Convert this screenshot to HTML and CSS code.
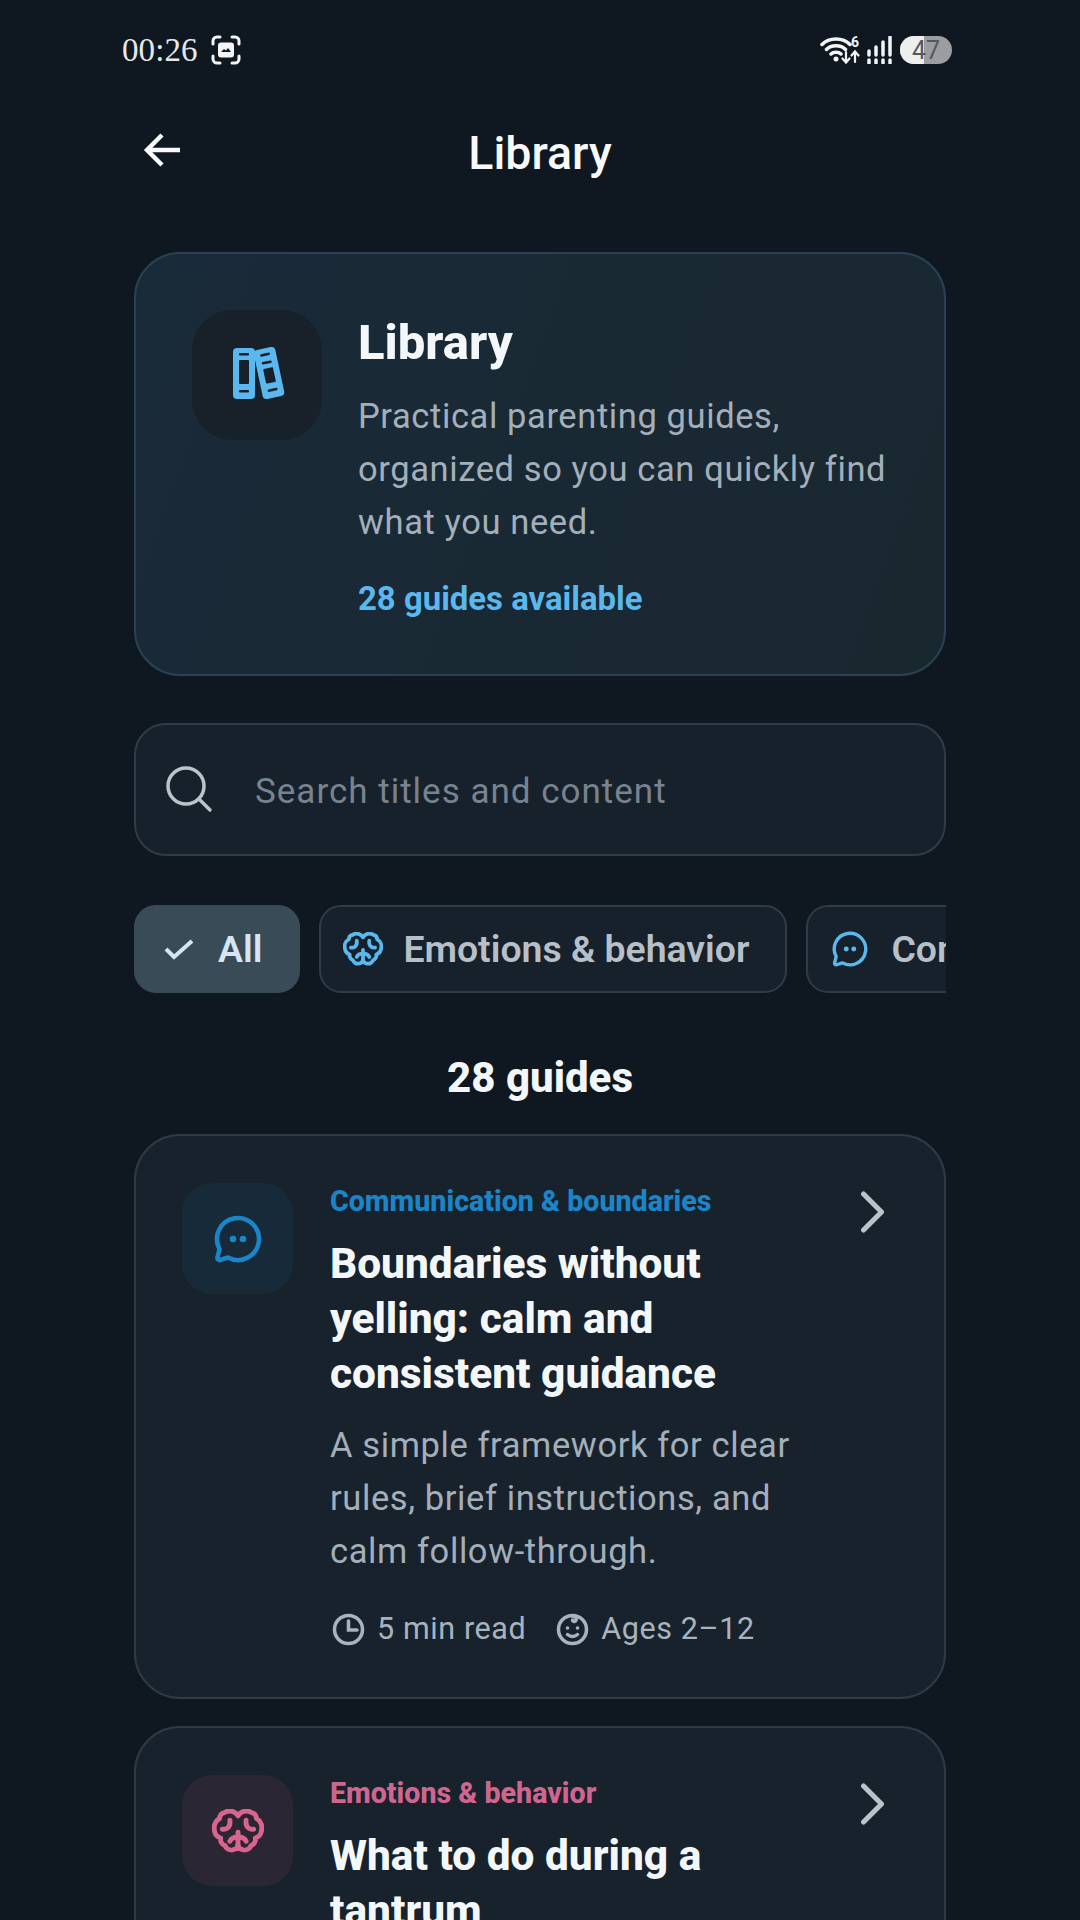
FILE: index.html
```html
<!DOCTYPE html>
<html lang="en">
<head>
<meta charset="utf-8">
<title>Library</title>
<link rel="stylesheet" href="styles.css">
</head>
<body>
<div class="screen">
  <div class="status">
    <div class="status-left">
      <span class="time">00:26</span>
      <svg class="shot" width="30" height="30" viewBox="0 0 30 30"><path class="shot-line" d="M2 9V6a4 4 0 0 1 4-4h3M21 2h3a4 4 0 0 1 4 4v3M28 21v3a4 4 0 0 1-4 4h-3M9 28H6a4 4 0 0 1-4-4v-3"/><rect class="shot-fill" x="7" y="7.500" width="16" height="15" rx="3"/><path class="shot-hole" d="M10 17l3-3 2 1.500 2-2.500 3 4z"/></svg>
    </div>
    <div class="status-right">
      <svg class="wifi" width="42" height="30" viewBox="0 0 42 30"><path class="st" d="M2 9.500C9 2 23 2 30 9.500M6.500 14.500C11 9.500 21 9.500 25.500 14.500M11 19c2.500-2.500 7.500-2.500 10 0"/><circle class="sf" cx="16" cy="24" r="2.500"/><path class="st thin" d="M26 17v10M22.500 23.500l3.500 4 3.500-4M35 27V17M31.500 20.500l3.500-4 3.500 4"/><text class="six" x="31" y="12">6</text></svg>
      <svg class="signal" width="26" height="28" viewBox="0 0 26 28"><path class="bars" d="M3 15v4M3 24v3M10 11v8M10 24v3M17 6v13M17 24v3M24 1v18M24 24v3"/></svg>
      <div class="battery"><span class="battery-level"></span><span class="battery-num">47</span></div>
    </div>
  </div>

  <header class="topbar">
    <svg class="back" width="40" height="38" viewBox="0 0 40 38"><path d="M38 19H6M20 4L5 19l15 15"/></svg>
    <h1 class="topbar-title">Library</h1>
  </header>

  <main class="content">
    <section class="hero">
      <div class="hero-icon">
        <svg width="60" height="60" viewBox="1 0 60 60">
          <rect class="b-fill" x="7" y="3" width="22" height="51" rx="4"/>
          <rect class="b-slot" x="13" y="8" width="10" height="2.500" rx="1"/>
          <rect class="b-slot" x="13" y="15" width="10" height="24" rx="1"/>
          <rect class="b-slot" x="13" y="45" width="10" height="2.500" rx="1"/>
          <g transform="rotate(-12 43 28)">
            <rect class="b-fill" x="32" y="3" width="22" height="50" rx="4"/>
            <rect class="b-slot" x="38" y="8" width="10" height="2.500" rx="1"/>
            <rect class="b-slot" x="38" y="16" width="10" height="2.500" rx="1"/>
            <rect class="b-slot" x="38" y="23" width="10" height="15" rx="1"/>
            <rect class="b-slot" x="38" y="44" width="10" height="2.500" rx="1"/>
          </g>
        </svg>
      </div>
      <div class="hero-text">
        <h2 class="hero-title">Library</h2>
        <p class="hero-desc">Practical parenting guides, organized so you can quickly find what you need.</p>
        <p class="hero-count">28 guides available</p>
      </div>
    </section>

    <div class="search">
      <svg class="search-icon" width="48" height="48" viewBox="0 0 48 48"><circle cx="21" cy="20" r="18"/><path d="M34 33l11 11"/></svg>
      <span class="search-text">Search titles and content</span>
    </div>

    <div class="chips">
      <div class="chip chip-active">
        <svg class="check" width="30" height="22" viewBox="0 0 30 22"><path d="M2 11l8 8L28 3"/></svg>
        <span>All</span>
      </div>
      <div class="chip">
        <svg class="ic ic-blue" width="40" height="34" viewBox="0 0 48 40"><use href="#brain"/></svg>
        <span>Emotions &amp; behavior</span>
      </div>
      <div class="chip chip-chat">
        <svg class="ic ic-blue" width="36" height="36" viewBox="0 0 48 48"><use href="#chat"/></svg>
        <span>Communication &amp; boundaries</span>
      </div>
    </div>

    <h3 class="count">28 guides</h3>

    <article class="card">
      <div class="card-icon tint-blue">
        <svg class="ic ic-deep" width="48" height="48" viewBox="0 0 48 48"><use href="#chat"/></svg>
      </div>
      <div class="card-body">
        <p class="cat cat-blue">Communication &amp; boundaries</p>
        <h4 class="card-title">Boundaries without yelling: calm and consistent guidance</h4>
        <p class="card-desc">A simple framework for clear rules, brief instructions, and calm follow-through.</p>
        <div class="meta">
          <span class="meta-item">
            <svg class="meta-ic" width="33" height="33" viewBox="0 0 33 33"><circle cx="16.500" cy="16.500" r="14"/><path d="M16.500 8v9h8.500"/></svg>
            5 min read
          </span>
          <span class="meta-item">
            <svg class="meta-ic" width="33" height="33" viewBox="0 0 33 33"><circle cx="16.500" cy="16.500" r="14"/><path d="M16 3c4 0 5 3 3.500 5-1 1-3 .5-3-1"/><path d="M11.500 21.500c3 2.500 7 2.500 10 0"/><circle class="meta-dot" cx="11.500" cy="15" r="1.800"/><circle class="meta-dot" cx="21.500" cy="15" r="1.800"/></svg>
            Ages 2–12
          </span>
        </div>
      </div>
      <svg class="chev" width="26" height="42" viewBox="0 0 26 42"><path d="M3.500 3l18 18-18 18"/></svg>
    </article>

    <article class="card">
      <div class="card-icon tint-pink">
        <svg class="ic ic-pink" width="52" height="44" viewBox="0 0 48 40"><use href="#brain"/></svg>
      </div>
      <div class="card-body">
        <p class="cat cat-pink">Emotions &amp; behavior</p>
        <h4 class="card-title">What to do during a tantrum</h4>
      </div>
      <svg class="chev" width="26" height="42" viewBox="0 0 26 42"><path d="M3.500 3l18 18-18 18"/></svg>
    </article>
  </main>
</div>

<svg class="defs" width="0" height="0">
  <defs>
    <g id="brain" stroke-width="4.500">
      <path d="M24 6C22 2 16 0 11.500 3 8.500 3.500 7 6 7 8.500 3 10.500 1 15.500 2.500 20.500c.5 3 2.500 5 5.500 6-.5 3 1 6 4 7 1 3 4 4.500 7 4 2.500-.5 5-2 5-5 0 3 2.500 4.500 5 5 3 .5 6-1 7-4 3-1 4.500-4 4-7 3-1 5-3 5.500-6C47 15.500 45 10.500 41 8.500c0-2.500-1.500-5-4.500-5.500C32 0 26 2 24 6z"/>
      <path d="M24 21v14M24 25.500c-2.500 0-6 .5-7.500 4M24 25.500c2.500 0 6 .5 7.500 4M16.500 10c.5 3.500-.5 6-2.500 7.500-1.500 1-3 1.200-4.500.8M31.500 10c-.5 3.500.5 6 2.500 7.500 1.500 1 3 1.200 4.500.8"/>
    </g>
    <g id="chat">
      <path d="M5.500 34A21 21 0 1 1 14 42.500L6 45c-1.500.5-3-1-2.500-2.500z"/>
      <circle class="dot" cx="19" cy="24" r="3.300"/>
      <circle class="dot" cx="29" cy="24" r="3.300"/>
    </g>
  </defs>
</svg>
</body>
</html>
```

FILE: styles.css
```css
* { box-sizing: border-box; }
html, body { margin: 0; padding: 0; }
body {
  width: 1080px;
  height: 1920px;
  overflow: hidden;
  background: #0f1720;
  font-family: Roboto, "Noto Sans", sans-serif;
  color: #f4f7fa;
}
h1, h2, h3, h4, p { margin: 0; }
.defs { position: absolute; }
.screen { height: 1920px; overflow: hidden; }

.status {
  height: 100px;
  padding: 0 128px 0 122px;
  display: flex;
  align-items: center;
  justify-content: space-between;
}
.status-left, .status-right { display: flex; align-items: center; }
.time { font-family: "Liberation Serif", serif; font-size: 33px; color: #e6e9ec; letter-spacing: 0.1px; }
.shot { margin-left: 13px; }
.shot-line { fill: none; stroke: #f2f4f6; stroke-width: 3; stroke-linecap: round; }
.shot-fill { fill: #f2f4f6; }
.shot-hole { fill: #0f1720; }
.status-right { gap: 4px; }
.st { fill: none; stroke: #f2f4f6; stroke-width: 3.500; stroke-linecap: round; }
.st.thin { stroke-width: 2.200; }
.sf { fill: #f2f4f6; }
.six { fill: #f2f4f6; font: 700 14px Roboto, sans-serif; }
.bars { fill: none; stroke: #f2f4f6; stroke-width: 3.500; stroke-linecap: round; }
.battery {
  margin-left: 4px;
  width: 52px;
  height: 28px;
  border-radius: 14px;
  background: #9b9da0;
  position: relative;
  overflow: hidden;
  display: flex;
  align-items: center;
  justify-content: center;
}
.battery-level { position: absolute; left: 0; top: 0; bottom: 0; width: 47%; background: #eceef0; }
.battery-num { position: relative; font-size: 25px; color: #55585c; font-family: Roboto, sans-serif; }

.topbar {
  height: 104px;
  display: flex;
  align-items: center;
  justify-content: center;
  position: relative;
}
.back { position: absolute; left: 142px; top: 31px; }
.back path { fill: none; stroke: #f7f9fb; stroke-width: 4.500; }
.topbar-title { font-size: 46.500px; font-weight: 500; line-height: 52px; padding-top: 2px; color: #f7f9fb; }

.content { padding: 48px 134px 0; display: flex; flex-direction: column; }

.hero {
  height: 424px;
  flex: none;
  border: 2px solid #2a4153;
  border-radius: 46px;
  background: linear-gradient(110deg, #192a39, #19282f);
  padding: 56px 40px 0 56px;
  display: flex;
  gap: 36px;
}
.hero-icon {
  width: 130px;
  height: 130px;
  flex: none;
  border-radius: 40px;
  background: #18212a;
  display: flex;
  align-items: center;
  justify-content: center;
}
.b-fill { fill: #5ab8ee; }
.b-slot { fill: #18212a; }
.hero-text { flex: 1; min-width: 0; }
.hero-title { font-size: 49px; font-weight: 800; line-height: 60px; padding-top: 3px; color: #f4f7fa; }
.hero-desc { margin-top: 17px; font-size: 34.500px; line-height: 53px; color: #a3afba; letter-spacing: 0.6px; }
.hero-count { margin-top: 28px; font-size: 32.900px; line-height: 44px; font-weight: 700; color: #5ab8ee; }

.search {
  margin-top: 47px;
  height: 133px;
  flex: none;
  border: 2px solid #2e3b48;
  border-radius: 32px;
  background: #17212b;
  display: flex;
  align-items: center;
  padding-left: 29px;
  gap: 42px;
}
.search-icon { flex: none; }
.search-icon circle, .search-icon path { fill: none; stroke: #bcc4cb; stroke-width: 3.500; stroke-linecap: round; }
.search-text { font-size: 35px; color: #77838f; letter-spacing: 1px; padding-top: 4px; }

.chips { margin-top: 49px; display: flex; gap: 19px; overflow: hidden; flex: none; }
.chip {
  flex: none;
  height: 88px;
  border: 2px solid #2e3b48;
  border-radius: 22px;
  background: #17212b;
  padding: 0 36px 0 22px;
  display: flex;
  align-items: center;
  gap: 20px;
  font-size: 37.400px;
  font-weight: 600;
  color: #b7c0c9;
}
.chip-chat { padding-left: 24px; gap: 23px; }
.chip-active { background: #3a4b58; border-color: #3a4b58; color: #d5e5f2; padding: 0 36px 0 28px; gap: 24px; }
.check path { fill: none; stroke: #d5e5f2; stroke-width: 4; }
.ic use { fill: none; stroke-width: 4.500; stroke-linecap: round; stroke-linejoin: round; }
.dot { fill: currentColor; stroke: none; }
.ic-blue { color: #5ab8ee; stroke: #5ab8ee; }
.ic-deep { color: #1a86c9; stroke: #1a86c9; }
.ic-pink { color: #d9648e; stroke: #d9648e; }

.count { margin-top: 61px; font-size: 42px; font-weight: 800; line-height: 48px; text-align: center; color: #f4f7fa; }

.card {
  margin-top: 32px;
  flex: none;
  border: 2px solid #2e3a46;
  border-radius: 46px;
  background: #18222c;
  padding: 47px 46px 46px;
  display: flex;
  align-items: flex-start;
  gap: 37px;
}
.card + .card { margin-top: 27px; }
.card-icon {
  width: 111px;
  height: 111px;
  flex: none;
  border-radius: 30px;
  display: flex;
  align-items: center;
  justify-content: center;
}
.tint-blue { background: #162a3a; }
.tint-pink { background: #2a2633; }
.card-body { flex: 1; min-width: 0; }
.cat { font-size: 28.600px; font-weight: 800; line-height: 34px; margin-top: 1px; }
.cat-blue { color: #1a86c9; }
.cat-pink { color: #d0668f; }
.card-title { margin-top: 18px; font-size: 42.400px; font-weight: 800; line-height: 55px; color: #f4f7fa; }
.card-desc { margin-top: 18px; font-size: 34.500px; line-height: 53px; color: #a3afba; letter-spacing: 0.6px; }
.meta { margin-top: 29px; display: flex; gap: 30px; padding-left: 2px; }
.meta-item { display: flex; align-items: center; gap: 12px; font-size: 30.500px; line-height: 44px; color: #a8b3be; letter-spacing: 0.6px; }
.meta-ic { flex: none; }
.meta-ic circle, .meta-ic path { fill: none; stroke: #a8b3be; stroke-width: 3.500; stroke-linecap: round; }
.meta-ic .meta-dot { fill: #a8b3be; stroke: none; }
.chev { flex: none; margin: 8px 12px 0 0; }
.chev path { fill: none; stroke: #bcc4cb; stroke-width: 5; stroke-linecap: round; stroke-linejoin: round; }
```
